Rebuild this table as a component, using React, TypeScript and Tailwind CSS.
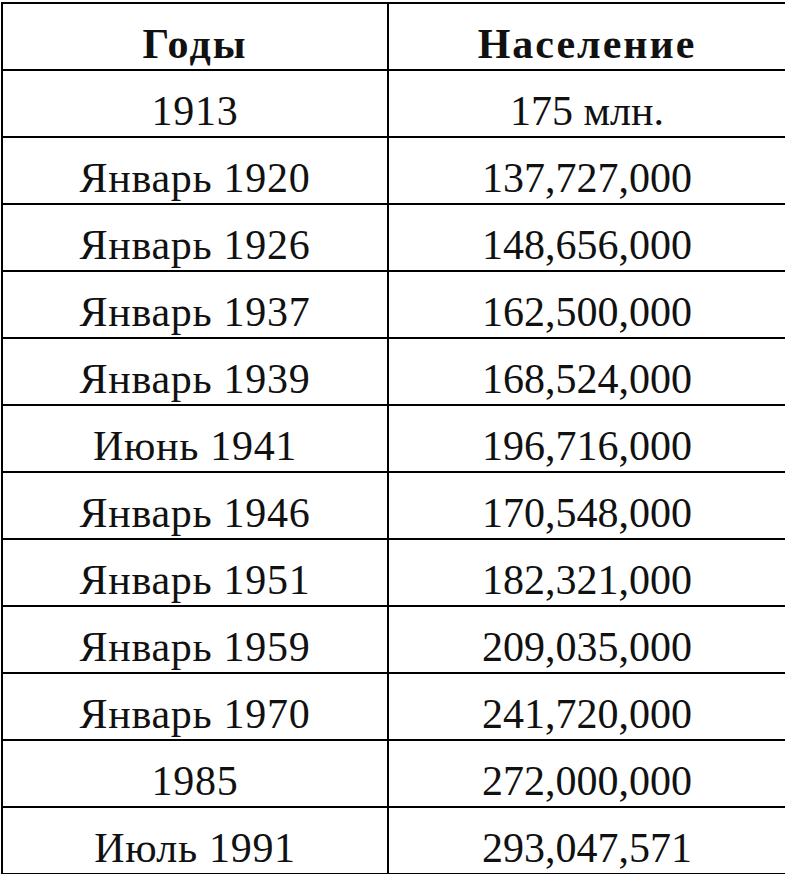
const ROWS: [string, string][] = [
  ["1913", "175 млн."],
  ["Январь 1920", "137,727,000"],
  ["Январь 1926", "148,656,000"],
  ["Январь 1937", "162,500,000"],
  ["Январь 1939", "168,524,000"],
  ["Июнь 1941", "196,716,000"],
  ["Январь 1946", "170,548,000"],
  ["Январь 1951", "182,321,000"],
  ["Январь 1959", "209,035,000"],
  ["Январь 1970", "241,720,000"],
  ["1985", "272,000,000"],
  ["Июль 1991", "293,047,571"],
];

const cell = "border-2 border-black h-[67px] p-0 pt-[17px] text-center align-top leading-[46px] whitespace-nowrap";

export default function App() {
  return (
    <div className="bg-white w-[785px] h-[874px] pt-[2px] pl-[1px] font-['Liberation_Serif',serif] text-[#111]">
      <table className="table-fixed border-collapse w-[784px]">
        <colgroup>
          <col className="w-[386px]" />
          <col className="w-[398px]" />
        </colgroup>
        <thead>
          <tr>
            <th className={cell + " text-[42px] font-bold tracking-[2px]"}>Годы</th>
            <th className={cell + " text-[42px] font-bold tracking-[2px]"}>Население</th>
          </tr>
        </thead>
        <tbody>
          {ROWS.map(([y, p]) => (
            <tr key={y}>
              <td className={cell + " text-[42px] tracking-[0.7px]"}>{y}</td>
              <td className={cell + " text-[42px]"}>{p}</td>
            </tr>
          ))}
        </tbody>
      </table>
    </div>
  );
}
